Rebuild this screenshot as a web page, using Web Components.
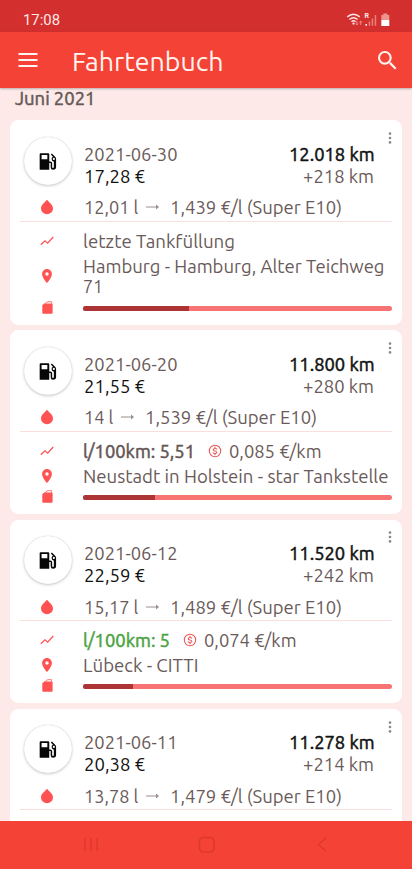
<!DOCTYPE html>
<html lang="de"><head><meta charset="utf-8"><title>Fahrtenbuch</title>
<style>html,body{margin:0;height:100%;overflow:hidden;background:#fdeae8}body{font-family:Ubuntu,"Noto Sans",sans-serif}</style></head>
<body><log-app></log-app>
<script>
const define=(name,html,setup)=>customElements.define(name,class extends HTMLElement{
  connectedCallback(){
    if(this.shadowRoot)return;
    const root=this.attachShadow({mode:'open'});
    const t=document.createElement('template');
    t.innerHTML=typeof html==='function'?html(this):html;
    root.append(t.content.cloneNode(true));
    if(setup)setup(this,root);
  }
});
const a=(e,n)=>e.getAttribute(n)||'';

/* Text scaled horizontally to a given advance width */
define('fit-text',`<style>:host{display:block;white-space:pre;font-size:17.900px}span{display:inline-block;vertical-align:top;transform-origin:0 50%}</style><span><slot></slot></span>`,(el,root)=>{
  const s=root.querySelector('span'),w=parseFloat(a(el,'w'));
  if(w){s.style.transform='scaleX('+w/s.getBoundingClientRect().width+')';el.style.width=w+'px';}
});

const icons={
 pump:['0 0 24 24','<path fill="currentColor" fill-rule="evenodd" d="M2 3.2Q2 2 3.2 2H12.300Q13.500 2 13.500 3.200V12H14.800Q17 12 17 14.200V18.500Q17 19.800 18 19.800Q19 19.800 19 18.500V12.200Q16.300 11.500 16.300 9Q16.300 7 18 6.300L15.400 3.700L16.700 2.400L20.800 6.500Q21.700 7.400 21.700 9V18.500Q21.700 21.800 18.100 21.800Q15.200 21.800 15.200 18.800V13.800H13.500V22H2ZM4.300 4.300V9.300H11.200V4.300ZM19 7.600A1.300 1.300 0 1 0 19 10.200A1.300 1.300 0 1 0 19 7.600Z"/>'],
 drop:['0 0 14 16','<path fill="currentColor" d="M7 .8C8.500 3 13 5.600 13 9.500A6 5.800 0 0 1 1 9.500C1 5.600 5.500 3 7 .8Z"/>'],
 trend:['0 0 14 10','<path fill="none" stroke="currentColor" stroke-width="1.300" d="M.8 8.800L5 4.800L7.700 7.200L13.200 1"/>'],
 pin:['5 2 14 20','<path fill="currentColor" d="M12 2C8.130 2 5 5.130 5 9c0 5.250 7 13 7 13s7-7.750 7-13c0-3.870-3.130-7-7-7zm0 9.500a2.500 2.500 0 1 1 0-5 2.500 2.500 0 0 1 0 5z"/>'],
 can:['0 0 11 13','<path fill="currentColor" d="M.3 4.300L3.500 1.600V2.400H9.700Q10.600 2.400 10.600 3.300V11.800Q10.600 12.700 9.700 12.700H1.200Q.3 12.700.3 11.800Z"/><path fill="none" stroke="currentColor" stroke-width=".8" d="M4 1.500L6 .7H9.600V2.600"/>'],
 coin:['0 0 14 14','<g fill="none" stroke="currentColor" stroke-width="1.050"><circle cx="7" cy="7" r="5.700"/><path d="M8.900 5.500Q8.600 4.500 7 4.500T5.200 5.700Q5.200 6.700 7 7T8.900 8.300Q8.900 9.500 7 9.500T5.100 8.500M7 2.800V4.500M7 9.500V11.200"/></g>'],
 arrow:['0 0 13 6','<path fill="none" stroke="currentColor" d="M0 3H12"/><path fill="currentColor" d="M10 .6L13 3L10 5.400Z"/>'],
 dots:['0 0 4 14','<g fill="currentColor"><circle cx="2" cy="2.600" r="1.300"/><circle cx="2" cy="7" r="1.300"/><circle cx="2" cy="11.400" r="1.300"/></g>'],
 menu:['0 0 20 14','<path stroke="currentColor" stroke-width="2" d="M.5 1H19.500M.5 7H19.500M.5 13H19.500"/>'],
 search:['3 3 18 18','<path fill="currentColor" d="M15.500 14h-.79l-.28-.27A6.471 6.471 0 0 0 16 9.500 6.500 6.500 0 1 0 9.500 16c1.610 0 3.090-.59 4.230-1.570l.27.28v.79l5 4.990L20.490 19l-4.990-5zm-6 0C7.010 14 5 11.990 5 9.500S7.010 5 9.500 5 14 7.010 14 9.500 11.990 14 9.500 14z"/>'],
 status:['0 0 46 16','<g fill="none" stroke="#ffe5e3" stroke-width="1.400"><path d="M1.200 4.900Q7.500-.6 13.800 4.900M3.400 7.500Q7.500 3.900 11.600 7.500M5.500 9.700Q7.500 8 9.500 9.700"/></g><circle cx="7.500" cy="11.600" r="1.100" fill="#ffe5e3"/><path d="M10.800 9V13M9.500 11.500L10.800 13L12.100 11.500M14.700 13V9M13.400 10.500L14.700 9L16 10.500" stroke="#ee9490" fill="none" stroke-width=".9"/><path fill="#e8807c" d="M22.700 9.500H24.200V13.800H22.700ZM25.700 6.500H27.200V13.800H25.700ZM28.700 3H30.200V13.800H28.700Z"/><path fill="#fff" d="M19.500 12H21V13.800H19.500Z"/><path fill="#ee9490" d="M37.300 1.500H41.300V3H43.300V8H35.300V3H37.300Z"/><path fill="#fff" d="M35.300 8H43.300V14H35.300Z"/>'],
 recent:['0 0 16 16','<path stroke="currentColor" stroke-width="1.500" d="M1.500 1V15M8 1V15M14.500 1V15"/>'],
 home:['0 0 18 18','<rect x="1.500" y="1.500" width="14.500" height="14.500" rx="4" fill="none" stroke="currentColor" stroke-width="1.600"/>'],
 back:['0 0 10 16','<path fill="none" stroke="currentColor" stroke-width="1.500" d="M9 1L1.500 8L9 15"/>']
};
define('ui-icon',el=>{const i=icons[a(el,'name')];return `<style>:host{display:block;flex:none;width:${a(el,'w')}px;height:${a(el,'h')}px}svg{display:block;width:100%;height:100%;overflow:visible}</style><svg viewBox="${i[0]}">${i[1]}</svg>`});

define('status-bar',`<style>:host{display:flex;flex:none;box-sizing:border-box;height:32px;background:#d32f2f;color:#ffe9e6;padding:8px 20.500px 0 23px;justify-content:space-between;align-items:flex-start}
fit-text{font:14.900px/25px Roboto,sans-serif}.s{display:grid}.s>*{grid-area:1/1}.r{font:bold 7px/8px Roboto,sans-serif;padding:4px 0 0 18.500px}ui-icon{margin:4px 0 0 -.5px}</style>
<fit-text w="37">17:08</fit-text><div class="s"><ui-icon name="status" w="46" h="16"></ui-icon><span class="r">R</span></div>`);

define('app-bar',`<style>:host{display:flex;flex:none;position:relative;z-index:1;box-sizing:border-box;height:56px;background:#f44336;color:#fff4ef;padding:0 15px 0 18px;align-items:center;box-shadow:0 1px 2px #0004}
fit-text{font-size:26px;line-height:34px;margin:3px auto 0 34px}</style>
<ui-icon name="menu" w="20" h="14"></ui-icon><fit-text w="151.500">Fahrtenbuch</fit-text><ui-icon name="search" w="19" h="19"></ui-icon>`);

define('usage-bar',el=>`<style>:host{display:block;height:5px;border-radius:2.500px;overflow:hidden;background:#f87474}i{display:block;height:5px;width:${a(el,'used')}px;background:#ad3435}</style><i></i>`);

define('fuel-card',el=>`<style>
:host{display:block;flex:none;box-sizing:border-box;background:#fff;border-radius:8.500px;padding:23.700px 10px 10.900px;position:relative;color:#6a5a59;line-height:21.700px}
.more{position:absolute;right:10.500px;top:10.800px;color:#8d8787}
.head{display:grid;grid-template-columns:64px 1fr auto;padding-right:18px;height:43.300px}
.disc{width:48px;height:48px;border-radius:50%;background:#fff;box-shadow:0 1px 3px #0003,0 0 1px #0003;display:grid;place-items:center;margin:-7px 0 0 4px;color:#080808}
.black{color:#111}.right{display:grid;justify-items:end}.km{-webkit-text-stroke:.5px}
.row{display:grid;grid-template-columns:63px 1fr;align-items:center}
.row>ui-icon{justify-self:start;color:#ff5252}
.line{display:flex;align-items:center}
.fuel{height:22px;margin-top:9px;padding-bottom:2.500px;border-bottom:1.200px solid #fcdedd}
.fuel .line{line-height:22px;padding-left:.5px}.fuel .line>ui-icon{margin:0 10.500px 0 8.300px;color:#988f8e}
.stat{height:20.300px;margin-top:8.900px}.stat .line{line-height:20.500px}
.cut{overflow:hidden;height:19.800px;align-self:start}
.avg{-webkit-text-stroke:.5px;color:${a(el,'tone')||'#625452'}}
.coin{margin:0 7.300px 0 13px;color:#e85858}
.place{margin-top:4.600px;line-height:20.600px}
.tank{height:12px;margin-top:5.200px}.tank ui-icon{margin-top:-1.500px}
</style>
<ui-icon class="more" name="dots" w="4" h="14"></ui-icon>
<div class="head"><div class="disc"><ui-icon name="pump" w="20" h="21"></ui-icon></div>
<div><fit-text w="93.500">${a(el,'date')}</fit-text><fit-text class="black" w="61">${a(el,'cost')} €</fit-text></div>
<div class="right"><fit-text class="black km" w="85.500">${a(el,'km')} km</fit-text><fit-text w="71">${a(el,'trip')} km</fit-text></div></div>
<div class="row fuel"><ui-icon name="drop" w="14" h="16" style="margin-left:20px"></ui-icon><div class="line"><fit-text w="${a(el,'lw')}">${a(el,'litres')} l</fit-text><ui-icon name="arrow" w="13" h="6"></ui-icon><fit-text w="172">${a(el,'price')} €/l (Super E10)</fit-text></div></div>
${el.hasAttribute('last')?'':`<div class="row stat"><ui-icon name="trend" w="14" h="10" style="margin-left:20px"></ui-icon>
${a(el,'avg')?`<div class="line"><fit-text class="avg" w="${a(el,'aw')}">l/100km: ${a(el,'avg')}</fit-text><ui-icon class="coin" name="coin" w="14" h="14"></ui-icon><fit-text w="92.500">${a(el,'rate')} €/km</fit-text></div>`:'<div class="line cut"><fit-text w="152">letzte Tankfüllung</fit-text></div>'}</div>
<div class="row place"><ui-icon name="pin" w="10" h="14" style="margin-left:22px"></ui-icon><div><slot></slot></div></div>
<div class="row tank"><ui-icon name="can" w="11" h="13" style="margin-left:21.500px"></ui-icon><usage-bar used="${a(el,'used')}"></usage-bar></div>`}`);

define('nav-bar',`<style>:host{display:flex;flex:none;position:relative;z-index:1;box-sizing:border-box;height:48px;background:#f44336;color:#de372e;padding:0 85px 0 83px;justify-content:space-between;align-items:center}ui-icon{margin-bottom:1px}ui-icon[name=home]{margin-right:2px}</style>
<ui-icon name="recent" w="16" h="15"></ui-icon><ui-icon name="home" w="18" h="18"></ui-icon><ui-icon name="back" w="10" h="15"></ui-icon>`);

define('log-app',`<style>:host{display:flex;flex-direction:column;width:412px;height:869px;overflow:hidden}
main{flex:1;min-height:0;overflow:hidden;padding:0 10px;display:flex;flex-direction:column;gap:5.300px}
.month{flex:none;line-height:21px;height:27.200px;margin-left:5px;color:#655856;-webkit-text-stroke:.5px}
fuel-card:last-child{min-height:184px}</style>
<status-bar></status-bar><app-bar></app-bar>
<main><fit-text class="month" w="80.500">Juni 2021</fit-text>
<fuel-card date="2021-06-30" cost="17,28" km="12.018" trip="+218" litres="12,01" lw="54.300" price="1,439" used="105.500"><fit-text w="301.500">Hamburg - Hamburg, Alter Teichweg</fit-text><fit-text w="20">71</fit-text></fuel-card>
<fuel-card date="2021-06-20" cost="21,55" km="11.800" trip="+280" litres="14" lw="29.300" price="1,539" avg="5,51" aw="112" rate="0,085" used="71.500"><fit-text w="305.500">Neustadt in Holstein - star Tankstelle</fit-text></fuel-card>
<fuel-card date="2021-06-12" cost="22,59" km="11.520" trip="+242" litres="15,17" lw="54.300" price="1,489" avg="5" aw="87" tone="#4ba342" rate="0,074" used="50"><fit-text w="115.500">Lübeck - CITTI</fit-text></fuel-card>
<fuel-card last date="2021-06-11" cost="20,38" km="11.278" trip="+214" litres="13,78" lw="54.300" price="1,479"></fuel-card></main>
<nav-bar></nav-bar>`);
</script></body></html>
